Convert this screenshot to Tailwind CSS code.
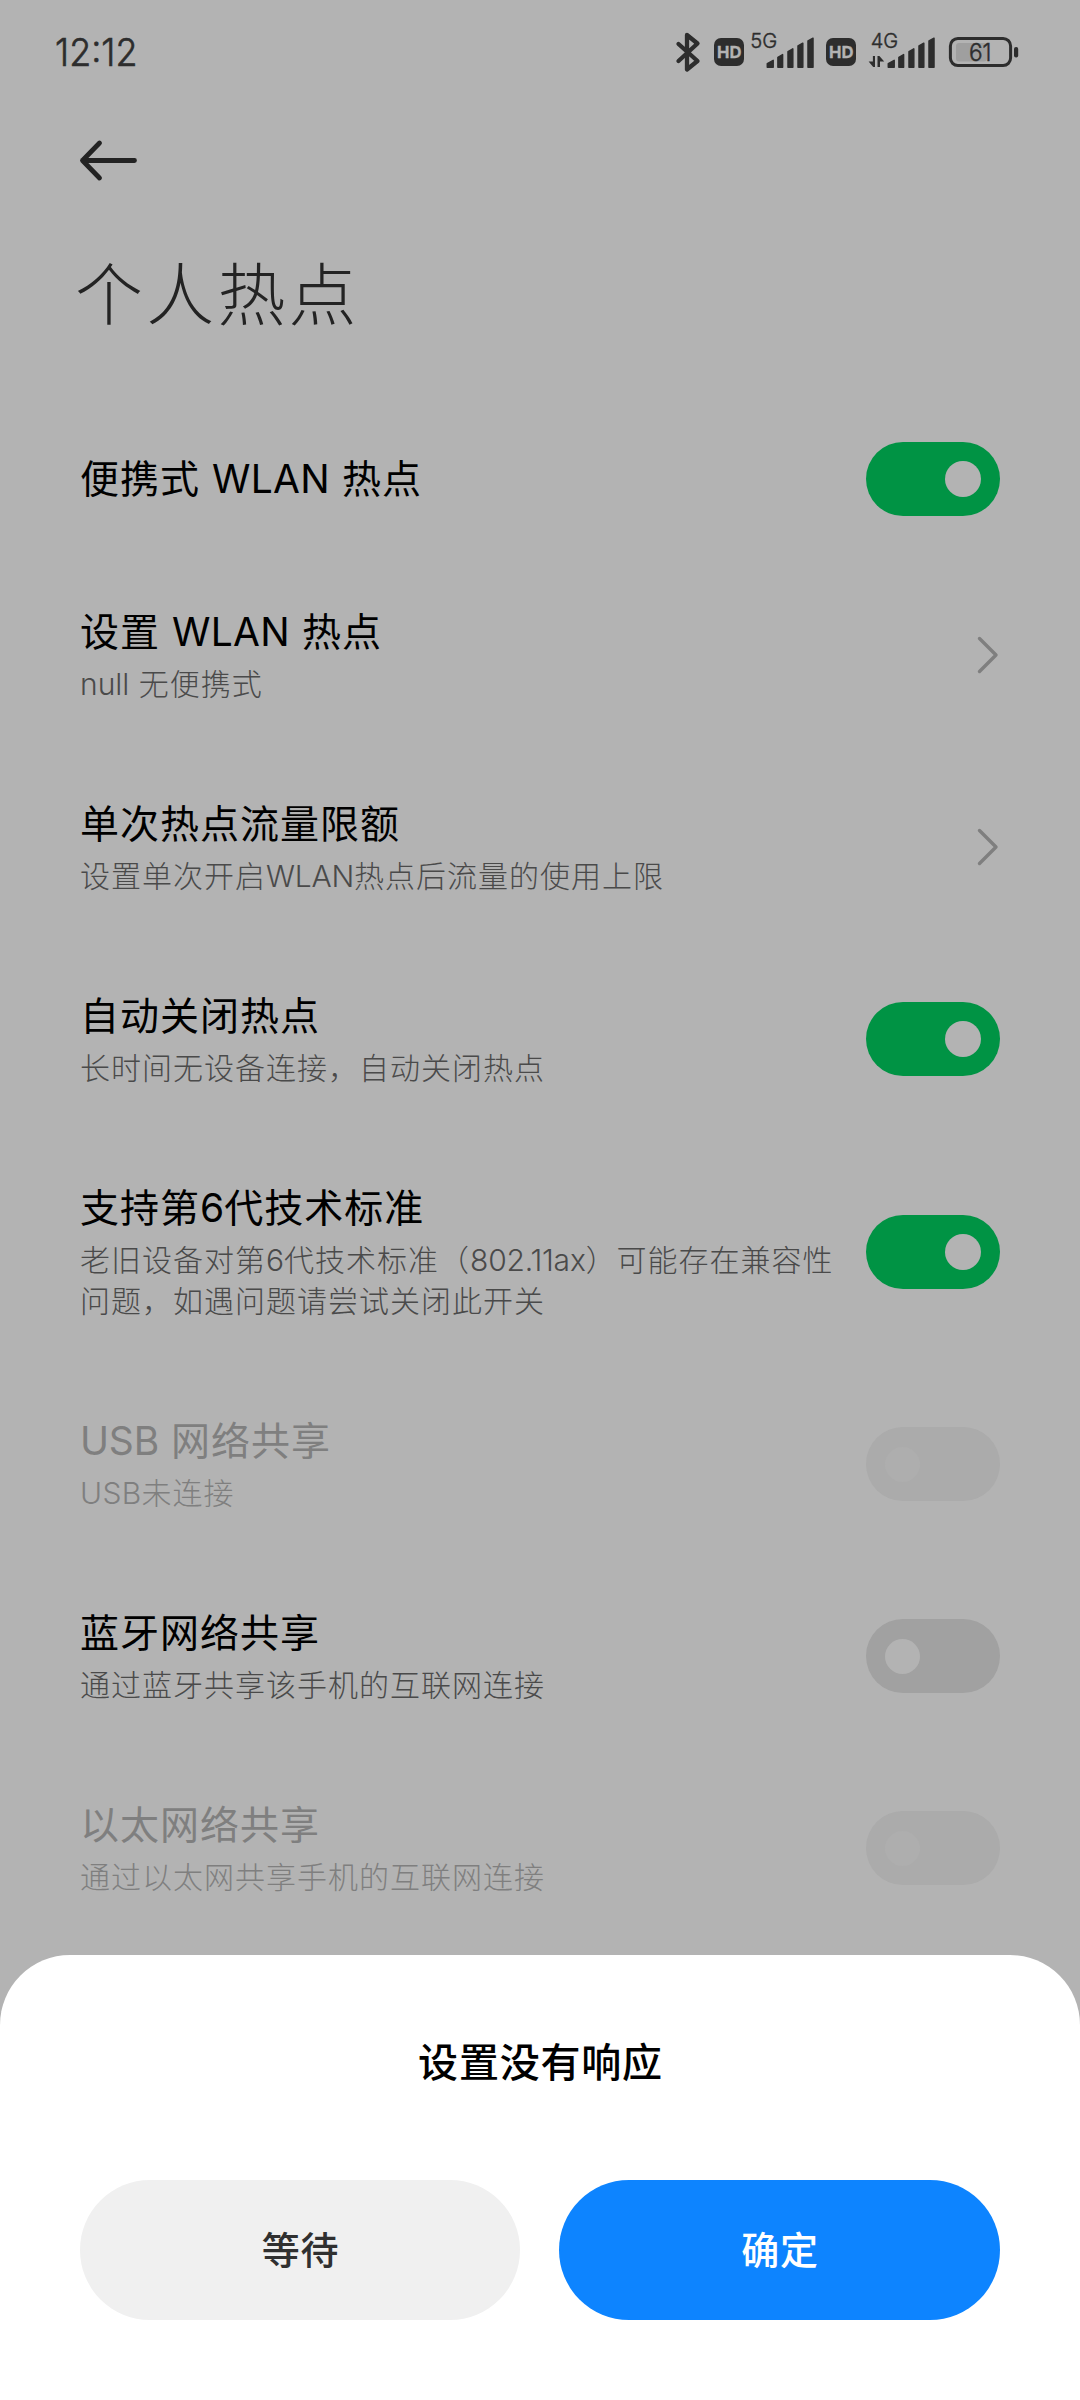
<!DOCTYPE html>
<html lang="zh-CN">
<head>
<meta charset="utf-8">
<title>个人热点</title>
<script src="https://cdn.jsdelivr.net/npm/@tailwindcss/browser@4"></script>
</head>
<body class="bg-[#b3b3b3]">
<div class="w-[1080px] h-[2400px] flex flex-col overflow-hidden bg-[#b3b3b3] text-black font-['Inter','Noto_Sans_CJK_SC',sans-serif]">

  <!-- status bar -->
  <header class="h-[104px] shrink-0 flex items-center justify-between pl-[55px] pr-[55px] text-[#2d2d2d]">
    <svg width="90" height="104" viewBox="55 0 90 104" fill="currentColor"><text x="55" y="66" font-family="Inter, sans-serif" font-weight="300" font-size="38.5" textLength="82.5" lengthAdjust="spacingAndGlyphs" stroke="currentColor" stroke-width="0.6">12:12</text></svg>
    <svg width="355" height="104" viewBox="670 0 355 104" fill="currentColor">
      <!-- bluetooth -->
      <path d="M678.5 44 L697.5 61 L687 69.5 V35 L697.5 43.5 L678.5 61" fill="none" stroke="currentColor" stroke-width="4.3" stroke-linejoin="round" stroke-linecap="round"/>
      <!-- SIM 1 -->
      <rect x="714" y="38" width="30" height="28" rx="7"/>
      <text x="717" y="57.8" font-family="Inter, sans-serif" font-weight="700" font-size="16.5" fill="#b3b3b3" stroke="#b3b3b3" stroke-width="0.3" textLength="24.5" lengthAdjust="spacingAndGlyphs">HD</text>
      <text x="750.2" y="48" font-family="Inter, sans-serif" font-weight="300" font-size="20" stroke="currentColor" stroke-width="0.4" textLength="27" lengthAdjust="spacingAndGlyphs">5G</text>
      <path id="bars" stroke="currentColor" stroke-width="1.5" stroke-linejoin="round" d="M767.3 67.2V63.6L773.2 60.4V67.2Z M777.9 67.2V57.3L782.6 54.6V67.2Z M788 67.2V51.6L792.8 48.8V67.2Z M798 67.2V46L802.8 43.2V67.2Z M808 67.2V40.9L813 38.2V67.2Z"/>
      <!-- SIM 2 -->
      <rect x="826" y="38" width="30" height="28" rx="7"/>
      <text x="829" y="57.8" font-family="Inter, sans-serif" font-weight="700" font-size="16.5" fill="#b3b3b3" stroke="#b3b3b3" stroke-width="0.3" textLength="24.5" lengthAdjust="spacingAndGlyphs">HD</text>
      <text x="870.7" y="48" font-family="Inter, sans-serif" font-weight="300" font-size="20" stroke="currentColor" stroke-width="0.4" textLength="27.5" lengthAdjust="spacingAndGlyphs">4G</text>
      <path d="M872.9 56H875V67H873.2L868.6 61.4H872.9Z M877.5 56H879.4L884.2 61.6H880V67H877.5Z"/>
      <use href="#bars" x="121"/>
      <!-- battery -->
      <rect x="956" y="43" width="31" height="18.5" rx="3" fill="#9f9f9f"/>
      <rect x="950.4" y="38.4" width="60.2" height="27.2" rx="7.5" fill="none" stroke="currentColor" stroke-width="3"/>
      <rect x="1014" y="47" width="4.2" height="10.5" rx="2"/>
      <text x="969" y="61" font-family="Inter, sans-serif" font-weight="300" font-size="23.5" stroke="currentColor" stroke-width="0.5" textLength="22.5" lengthAdjust="spacingAndGlyphs">61</text>
    </svg>
  </header>

  <!-- app bar -->
  <div class="h-[136px] shrink-0 pt-[33px] pl-[78px]">
    <svg width="62" height="48" viewBox="0 0 62 48" fill="none" stroke="#232323" stroke-width="4.8" stroke-linecap="round" stroke-linejoin="round"><path d="M56.5 23.5H4.5M21.5 6L4.5 23.5L21.5 41"/></svg>
  </div>
  <h1 class="h-[159px] shrink-0 pl-[75px] text-[68px] leading-[101px] tracking-[3.2px] text-[#232323] font-light font-['Noto_Sans_CJK_SC_Light','Noto_Sans_CJK_SC',sans-serif]">个人热点</h1>

  <!-- preferences -->
  <main class="h-[1556px] shrink-0 px-20 text-[39px] leading-[52px] tracking-[1px]">
    <div class="h-40 flex items-center justify-between">
      <div>便携式 <span class="tracking-[0.3px]">WLAN</span> 热点</div>
      <div class="w-[134px] h-[74px] rounded-full bg-[#009344] flex items-center justify-end pr-[19px]"><div class="size-9 rounded-full bg-[#b3b3b3]"></div></div>
    </div>

    <div class="h-48 flex items-center justify-between">
      <div class="flex flex-col gap-1.5">
        <div>设置 <span class="tracking-[0.3px]">WLAN</span> 热点</div>
        <div class="text-[30px] leading-[41px] text-[#4a4a4a] font-light font-['Inter','Noto_Sans_CJK_SC_Light','Noto_Sans_CJK_SC',sans-serif]"><span class="tracking-[0]">null</span> 无便携式</div>
      </div>
      <svg width="24" height="42" viewBox="0 0 24 42" fill="none" stroke="#7f7f7f" stroke-width="3.4" stroke-linecap="round" stroke-linejoin="round"><path d="M3.5 4.5L20 21L3.5 37.5"/></svg>
    </div>

    <div class="h-48 flex items-center justify-between">
      <div class="flex flex-col gap-1.5">
        <div>单次热点流量限额</div>
        <div class="text-[30px] leading-[41px] text-[#4a4a4a] font-light font-['Inter','Noto_Sans_CJK_SC_Light','Noto_Sans_CJK_SC',sans-serif]">设置单次开启<span class="tracking-[-0.2px]">WLAN</span>热点后流量的使用上限</div>
      </div>
      <svg width="24" height="42" viewBox="0 0 24 42" fill="none" stroke="#7f7f7f" stroke-width="3.4" stroke-linecap="round" stroke-linejoin="round"><path d="M3.5 4.5L20 21L3.5 37.5"/></svg>
    </div>

    <div class="h-48 flex items-center justify-between">
      <div class="flex flex-col gap-1.5">
        <div>自动关闭热点</div>
        <div class="text-[30px] leading-[41px] text-[#4a4a4a] font-light font-['Inter','Noto_Sans_CJK_SC_Light','Noto_Sans_CJK_SC',sans-serif]">长时间无设备连接，自动关闭热点</div>
      </div>
      <div class="w-[134px] h-[74px] rounded-full bg-[#009344] flex items-center justify-end pr-[19px]"><div class="size-9 rounded-full bg-[#b3b3b3]"></div></div>
    </div>

    <div class="h-[233px] flex items-center justify-between">
      <div class="flex flex-col gap-1.5 pt-px">
        <div>支持第<span class="tracking-[0]">6</span>代技术标准</div>
        <div class="text-[30px] leading-[41px] text-[#4a4a4a] font-light font-['Inter','Noto_Sans_CJK_SC_Light','Noto_Sans_CJK_SC',sans-serif] whitespace-nowrap">老旧设备对第<span class="tracking-[0]">6</span>代技术标准（<span class="tracking-[-0.2px]">802.11ax</span>）可能存在兼容性<br>问题，如遇问题请尝试关闭此开关</div>
      </div>
      <div class="w-[134px] h-[74px] rounded-full bg-[#009344] flex items-center justify-end pr-[19px]"><div class="size-9 rounded-full bg-[#b3b3b3]"></div></div>
    </div>

    <div class="h-48 flex items-center justify-between">
      <div class="flex flex-col gap-1.5 text-[#7f7f7f]">
        <div><span class="tracking-[-0.2px]">USB</span> 网络共享</div>
        <div class="text-[30px] leading-[41px] font-light font-['Inter','Noto_Sans_CJK_SC_Light','Noto_Sans_CJK_SC',sans-serif]"><span class="tracking-[0.3px]">USB</span>未连接</div>
      </div>
      <div class="w-[134px] h-[74px] rounded-full bg-[#ababab] flex items-center pl-[19px]"><div class="size-[35px] rounded-full bg-[#aeaeae]"></div></div>
    </div>

    <div class="h-48 flex items-center justify-between">
      <div class="flex flex-col gap-1.5">
        <div>蓝牙网络共享</div>
        <div class="text-[30px] leading-[41px] text-[#4a4a4a] font-light font-['Inter','Noto_Sans_CJK_SC_Light','Noto_Sans_CJK_SC',sans-serif]">通过蓝牙共享该手机的互联网连接</div>
      </div>
      <div class="w-[134px] h-[74px] rounded-full bg-[#a1a1a1] flex items-center pl-[19px]"><div class="size-[35px] rounded-full bg-[#b3b3b3]"></div></div>
    </div>

    <div class="h-48 flex items-center justify-between">
      <div class="flex flex-col gap-1.5 text-[#7f7f7f]">
        <div>以太网络共享</div>
        <div class="text-[30px] leading-[41px] font-light font-['Inter','Noto_Sans_CJK_SC_Light','Noto_Sans_CJK_SC',sans-serif]">通过以太网共享手机的互联网连接</div>
      </div>
      <div class="w-[134px] h-[74px] rounded-full bg-[#ababab] flex items-center pl-[19px]"><div class="size-[35px] rounded-full bg-[#aeaeae]"></div></div>
    </div>
  </main>

  <!-- bottom sheet -->
  <section class="flex-1 rounded-t-[70px] bg-white px-20 pt-[81px] font-medium">
    <h2 class="text-center text-[40px] leading-[54px] tracking-[0.8px] pl-px">设置没有响应</h2>
    <div class="mt-[90px] flex gap-[39px]">
      <button class="w-[440px] h-[140px] rounded-full bg-[#f0f0f0] text-[#303030] text-[38px] tracking-[0.8px] font-medium pl-px">等待</button>
      <button class="w-[441px] h-[140px] rounded-full bg-[#0d84ff] text-white text-[38px] tracking-[0.8px] font-medium pl-px">确定</button>
    </div>
  </section>
</div>
</body>
</html>
